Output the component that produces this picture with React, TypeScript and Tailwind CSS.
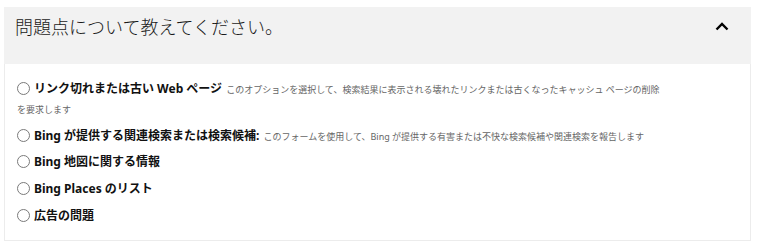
const font = {
  fontFamily: '"Noto Sans", "Noto Sans CJK JP", sans-serif',
};

type Option = {
  label: string;
  desc?: string;
};

const options: Option[] = [
  {
    label: "リンク切れまたは古い Web ページ",
    desc: "このオプションを選択して、検索結果に表示される壊れたリンクまたは古くなったキャッシュ ページの削除を要求します",
  },
  {
    label: "Bing が提供する関連検索または検索候補:",
    desc: "このフォームを使用して、Bing が提供する有害または不快な検索候補や関連検索を報告します",
  },
  { label: "Bing 地図に関する情報" },
  { label: "Bing Places のリスト" },
  { label: "広告の問題" },
];

const App = () => {
  return (
    <div className="w-[757px] h-[250px] bg-white pt-[7px] pl-[4px]" style={font}>
      <div className="w-[747px]">
        <div className="flex justify-between items-start h-[57px] bg-[#f2f2f2] pl-[11px] pr-[22px] pt-[8px]">
          <p className="text-[18px] leading-[24px] font-light text-[#1a1a1a]">
            問題点について教えてください。
          </p>
          <svg width="14" height="9" viewBox="0 0 14 9" className="mt-[7px]">
            <path d="M1.5 7.5 L7 2 L12.5 7.5" fill="none" stroke="#000" strokeWidth="2.4" />
          </svg>
        </div>
        <div className="h-[177px] border border-t-0 border-[#ececec] pl-[12px] pt-[15px]">
          <div className="flex flex-col gap-[6.7px] w-[650px]">
            {options.map((o, i) => (
              <div key={i} className="text-[12px] leading-[20px] text-[#111]">
                <span className="inline-block align-[-2px] w-[13px] h-[13px] rounded-full border border-[#7a7a7a] bg-white mr-[4px]"></span>
                <span className="font-bold leading-[16px]">{o.label}</span>
                {o.desc && (
                  <span className="text-[9px] leading-[13px] text-[#666] ml-[4px]">{o.desc}</span>
                )}
              </div>
            ))}
          </div>
        </div>
      </div>
    </div>
  );
};

export default App;
